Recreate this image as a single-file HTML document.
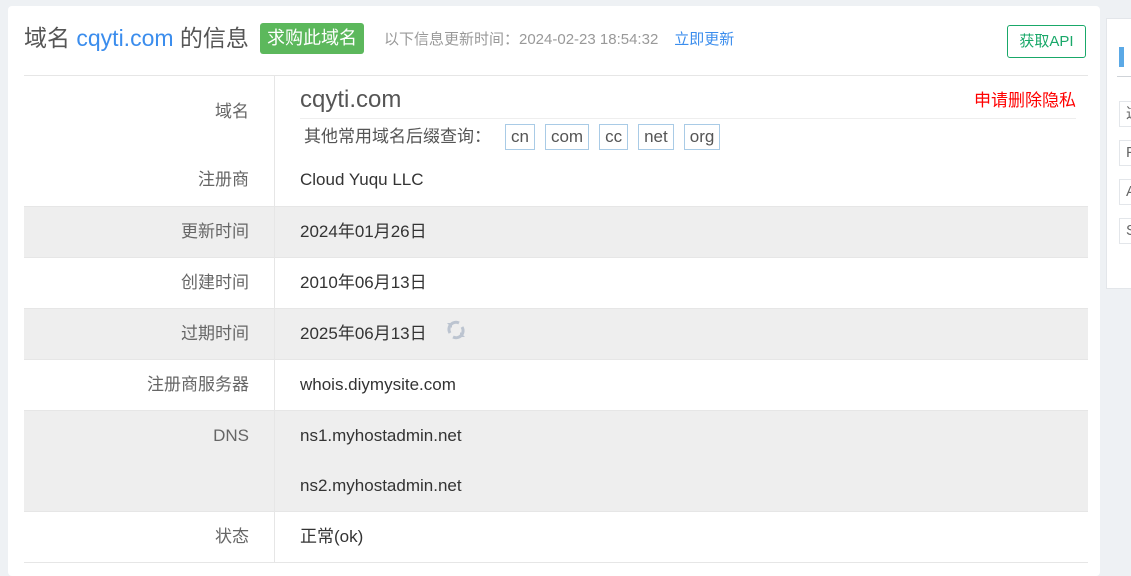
<!DOCTYPE html>
<html><head><meta charset="utf-8"><style>
body{margin:0;width:1131px;height:568px;background:#eef1f4;font-family:"Liberation Sans","Noto Sans CJK SC",sans-serif;overflow:hidden;position:relative;color:#333}
.card{position:absolute;left:8px;top:6px;width:1092px;height:570px;background:#fff;border-radius:4px}
.side{position:absolute;left:1106px;top:18px;width:40px;height:269px;background:#fff;border:1px solid #e3e6ea}
.title{position:absolute;left:24px;top:21px;font-size:23px;line-height:34px;color:#555;white-space:nowrap}
.title .b{color:#3b8ded}
.buy{position:absolute;left:260px;top:23px;width:104px;height:31px;background:#5cb85c;color:#fff;font-size:18px;line-height:31px;text-align:center;border-radius:3px}
.upd{position:absolute;left:384px;top:30px;font-size:15px;line-height:20px;color:#999;white-space:nowrap}
.upd a{color:#3b8ded;margin-left:16px}
.api{position:absolute;left:1007px;top:25px;width:79px;height:33px;border:1px solid #19a869;border-radius:3px;color:#19a869;font-size:15px;line-height:31px;text-align:center;box-sizing:border-box}
.hl{position:absolute;left:24px;top:75px;width:1064px;height:1px;background:#e6e6e6}
.row{position:absolute;left:24px;width:1064px;border-bottom:1px solid #e6e6e6;font-size:17px;line-height:50px}
.row.g{background:#eeeeee}
.lab{position:absolute;left:0;width:250px;text-align:right;top:0;color:#666;font-size:17px;box-sizing:border-box;padding-right:25px}
.val{position:absolute;left:276px;top:0;color:#333;white-space:nowrap}
.vl{position:absolute;left:274px;top:76px;width:1px;height:486px;background:#e6e6e6}
.tag{display:inline-block;border:1px solid #a9cbe6;padding:0 5px;height:24px;line-height:24px;margin-left:10px;font-size:17px;color:#555}
.si{position:absolute;left:12px;width:30px;height:24px;border:1px solid #e3e6ea;font-size:15px;line-height:24px;color:#666;padding-left:6px}
</style></head><body>
<div class="card"></div>
<div class="side"><div style="position:absolute;left:12px;top:28px;width:5px;height:20px;background:#5ba9e6"></div><div style="position:absolute;left:10px;top:57px;width:30px;height:1px;background:#cfd3d8"></div>
<div class="si" style="top:82px">这</div>
<div class="si" style="top:121px">F</div>
<div class="si" style="top:160px">A</div>
<div class="si" style="top:199px">S</div></div>
<div class="title">域名 <span class="b">cqyti.com</span> 的信息</div>
<div class="buy">求购此域名</div>
<div class="upd">以下信息更新时间：2024-02-23 18:54:32<a>立即更新</a></div>
<div class="api">获取API</div>
<div class="hl"></div>
<div class="row" style="top:76px;height:79px;border:0;line-height:normal">
<div class="lab" style="top:24px;line-height:24px">域名</div>
<div style="position:absolute;left:276px;top:10px;font-size:24px;line-height:28px;color:#555">cqyti.com</div>
<div style="position:absolute;right:12px;top:14px;font-size:17px;line-height:22px;color:#f00">申请删除隐私</div>
<div style="position:absolute;left:276px;top:42px;width:776px;height:1px;background:#eee"></div>
<div style="position:absolute;left:280px;top:48px;font-size:17px;line-height:26px;color:#555;white-space:nowrap">其他常用域名后缀查询：<span class="tag" style="margin-left:14px">cn</span><span class="tag">com</span><span class="tag">cc</span><span class="tag">net</span><span class="tag">org</span></div>
</div>
<div class="row" style="top:155px;height:51px"><div class="lab">注册商</div><div class="val">Cloud Yuqu LLC</div></div>
<div class="row g" style="top:207px;height:50px"><div class="lab">更新时间</div><div class="val">2024年01月26日</div></div>
<div class="row" style="top:258px;height:50px"><div class="lab">创建时间</div><div class="val">2010年06月13日</div></div>
<div class="row g" style="top:309px;height:50px"><div class="lab">过期时间</div><div class="val">2025年06月13日
<svg width="22" height="22" viewBox="0 0 22 22" style="position:absolute;left:145px;top:10px"><path d="M5 14a7 7 0 0 1 9-10M17 8a7 7 0 0 1-9 10" fill="none" stroke="#bcc4d0" stroke-width="3"/><path d="M2 4l5 0 0 5z M20 18l-5 0 0-5z" fill="#bcc4d0"/></svg></div></div>
<div class="row" style="top:360px;height:50px"><div class="lab">注册商服务器</div><div class="val">whois.diymysite.com</div></div>
<div class="row g" style="top:411px;height:100px"><div class="lab">DNS</div><div class="val">ns1.myhostadmin.net</div><div class="val" style="top:50px">ns2.myhostadmin.net</div></div>
<div class="row" style="top:512px;height:50px"><div class="lab">状态</div><div class="val">正常(ok)</div></div>
<div class="vl"></div>
</body></html>
